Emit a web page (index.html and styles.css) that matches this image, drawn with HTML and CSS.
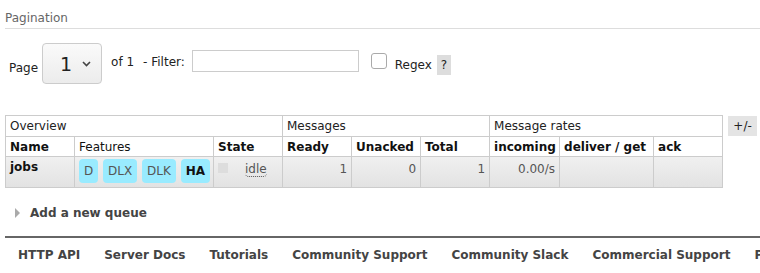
FILE: index.html
```html
<!DOCTYPE html>
<html lang="en">

<head>
  <meta charset="UTF-8" />
  <title>Queues</title>
  <link rel="stylesheet" href="styles.css">
</head>

<body>
  <div class="main">
    <h3 class="section-title">Pagination</h3>

    <div class="pager">
      <span class="pager-label">Page</span>
      <span class="page-select">
        <span class="page-num">1</span>
        <svg class="chevron" width="9" height="6" viewBox="0 0 9 6">
          <path d="M1 1 L4.5 4.5 L8 1" fill="none" stroke="#444" stroke-width="1.6" />
        </svg>
      </span>
      <span class="of">of 1</span>
      <span class="filter-label">- Filter:</span>
      <input class="filter" type="text" />
      <span class="check"></span>
      <span class="regex">Regex</span>
      <span class="help">?</span>
    </div>

    <div class="table-wrap">
      <table class="list">
        <colgroup>
          <col style="width: 69px">
          <col style="width: 139px">
          <col style="width: 69px">
          <col style="width: 69px">
          <col style="width: 69px">
          <col style="width: 69px">
          <col style="width: 70px">
          <col style="width: 94px">
          <col style="width: 69px">
        </colgroup>
        <thead>
          <tr class="group">
            <th colspan="3">Overview</th>
            <th colspan="3">Messages</th>
            <th colspan="3">Message rates</th>
          </tr>
          <tr class="cols">
            <th>Name</th>
            <th class="plain">Features</th>
            <th>State</th>
            <th>Ready</th>
            <th>Unacked</th>
            <th>Total</th>
            <th>incoming</th>
            <th>deliver / get</th>
            <th>ack</th>
          </tr>
        </thead>
        <tbody>
          <tr>
            <td class="name">jobs</td>
            <td class="features">
              <span class="badge">D</span>
              <span class="badge">DLX</span>
              <span class="badge">DLK</span>
              <span class="badge strong">HA</span>
            </td>
            <td class="state"><span class="state-box"></span><span class="idle">idle</span></td>
            <td class="num">1</td>
            <td class="num">0</td>
            <td class="num">1</td>
            <td class="num">0.00/s</td>
            <td></td>
            <td></td>
          </tr>
        </tbody>
      </table>
      <span class="toggle">+/-</span>
    </div>

    <div class="add-queue">
      <span class="arrow"></span>
      <span>Add a new queue</span>
    </div>
  </div>

  <div class="footer">
    <a href="#">HTTP API</a>
    <a href="#">Server Docs</a>
    <a href="#">Tutorials</a>
    <a href="#">Community Support</a>
    <a href="#">Community Slack</a>
    <a href="#">Commercial Support</a>
    <a href="#">Plugins</a>
  </div>
</body>

</html>
```

FILE: styles.css
```css
* {
  font-family: "DejaVu Sans", Verdana, sans-serif;
  box-sizing: border-box;
}

body {
  margin: 0;
  font-size: 12px;
  color: #484848;
  background-color: #fff;
  overflow: hidden;
}

.main {
  padding: 0 0 0 5px;
}

.section-title {
  margin: 0;
  padding: 11px 0 3px 0;
  font-size: 12px;
  font-weight: normal;
  color: #666;
  border-bottom: 1px solid #ddd;
}

.pager {
  display: flex;
  align-items: center;
  height: 41px;
  margin-top: 14px;
  padding-left: 4px;
  color: #222;
}

.pager-label {
  margin-top: 8px;
  margin-right: 4px;
}

.page-select {
  display: flex;
  align-items: center;
  width: 60px;
  height: 41px;
  padding-left: 17px;
  border: 1px solid #ccc;
  border-radius: 4px;
  background: linear-gradient(#fafafa, #ececec);
}

.page-num {
  font-size: 19px;
  color: #222;
  margin-right: 10px;
}

.of {
  margin-left: 9px;
  margin-top: -3px;
}

.filter-label {
  margin-left: 9px;
  margin-top: -3px;
}

.filter {
  width: 167px;
  height: 22px;
  margin-left: 7px;
  margin-top: -5px;
  border: 1px solid #ccc;
  padding: 0;
}

.check {
  width: 16px;
  height: 16px;
  margin-left: 12px;
  margin-top: -5px;
  border: 1px solid #aaa;
  border-radius: 3px;
}

.regex {
  margin-left: 8px;
  margin-top: 3px;
}

.help {
  margin-left: 5px;
  margin-top: 3px;
  width: 14px;
  height: 20px;
  line-height: 20px;
  text-align: center;
  background-color: #ddd;
}

.table-wrap {
  display: flex;
  align-items: flex-start;
  margin-top: 31px;
}

.list {
  border-collapse: collapse;
  table-layout: fixed;
  width: 718px;
  border: 1px solid #ccc;
}

.list th,
.list td {
  border: 1px solid #ccc;
  padding: 0 4px;
  text-align: left;
  white-space: nowrap;
  overflow: hidden;
}

.list th {
  height: 21px;
  font-weight: normal;
  color: #222;
}

.list .cols th {
  height: 20px;
  font-weight: bold;
  color: #111;
}

.list .cols th.plain {
  font-weight: normal;
}

.list tbody tr {
  background: linear-gradient(#f0f0f0, #e2e2e2);
}

.list td {
  height: 31px;
  vertical-align: top;
  padding-top: 5px;
  color: #555;
}

.list td.name {
  font-weight: bold;
  color: #111;
  padding-top: 3px;
}

.list td.num {
  text-align: right;
}

.list td.features {
  padding: 2px 4px 0 4px;
}

.badge {
  display: inline-block;
  height: 24px;
  line-height: 24px;
  padding: 0 5px;
  margin-right: 1px;
  border-radius: 4px;
  background-color: #99ebff;
  color: #555;
}

.badge.strong {
  font-weight: bold;
  color: #111;
}

.list td.state {
  padding-top: 5px;
}

.state-box {
  display: inline-block;
  width: 10px;
  height: 10px;
  margin-top: 1px;
  vertical-align: top;
  background-color: #ddd;
}

.idle {
  display: inline-block;
  margin-left: 17px;
  border-bottom: 1px dotted #555;
  border-radius: 0 0 4px 4px;
  line-height: 14px;
}

.toggle {
  margin-left: 5px;
  margin-top: 1px;
  width: 29px;
  height: 20px;
  line-height: 20px;
  text-align: center;
  background-color: #e4e4e4;
  color: #222;
}

.add-queue {
  display: flex;
  align-items: center;
  margin-top: 18px;
  padding-left: 10px;
  font-weight: bold;
  color: #444;
}

.arrow {
  width: 0;
  height: 0;
  margin-right: 10px;
  border-top: 5px solid transparent;
  border-bottom: 5px solid transparent;
  border-left: 5px solid #aaa;
}

.footer {
  display: flex;
  margin: 16px 0 0 5px;
  padding: 10px 0 0 13px;
  border-top: 2px solid #666;
  white-space: nowrap;
}

.footer a {
  margin-right: 24px;
  font-weight: bold;
  color: #444;
  text-decoration: none;
}
```
